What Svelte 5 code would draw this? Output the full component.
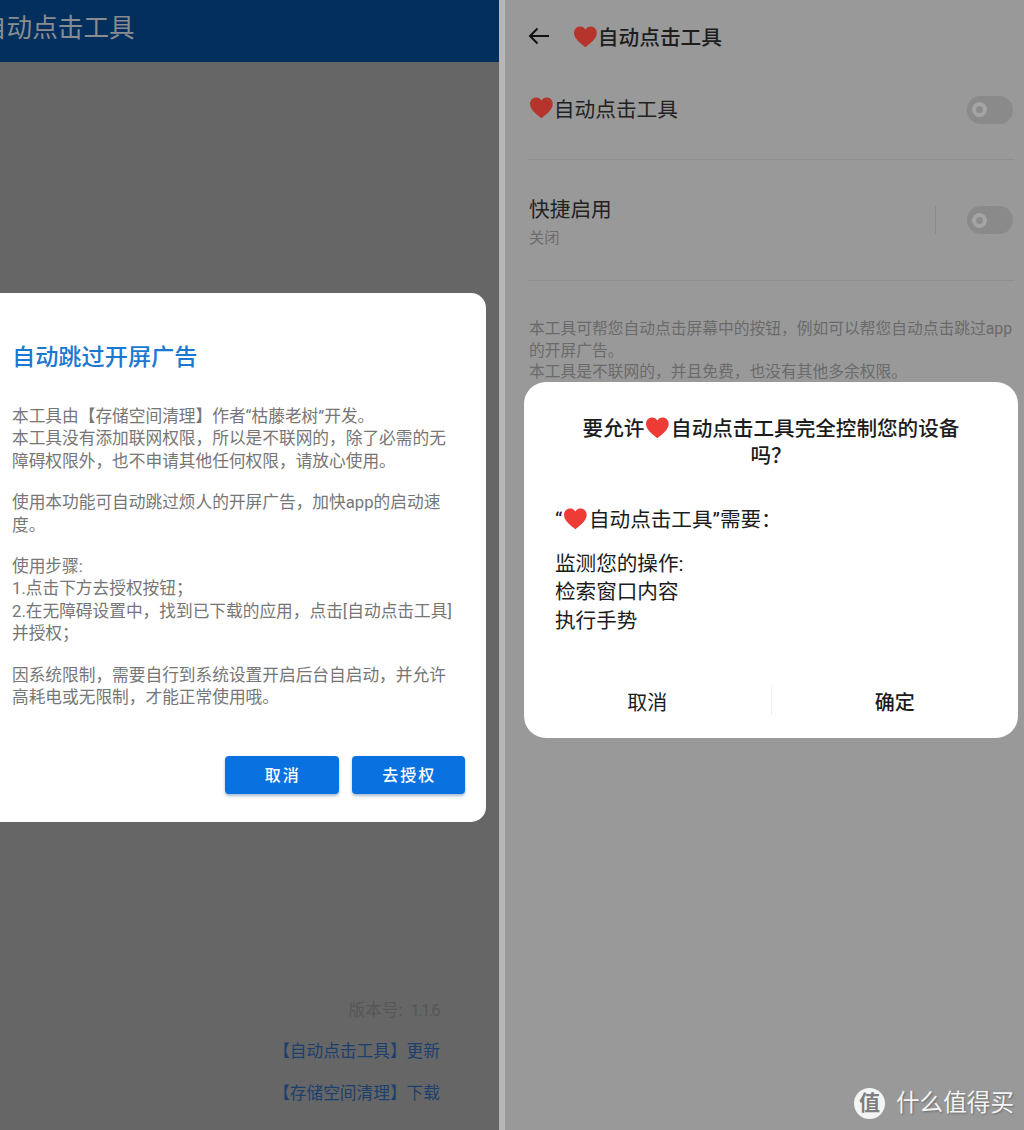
<script lang="ts">
const heart = 'M12 21.5C5.5 16.5 1 12.6 1 7.6 1 4 3.7 1.5 7 1.5c2 0 3.900 1 5 2.800 1.100-1.800 3-2.800 5-2.800 3.300 0 6 2.500 6 6.100 0 5-4.500 8.900-11 13.900z'
</script>

{#snippet heartIcon(cls)}
  <svg class="heart {cls}" viewBox="0 0 24 24" aria-hidden="true"><path d={heart} /></svg>
{/snippet}

{#snippet toggle()}
  <span class="toggle"><span class="knob"></span></span>
{/snippet}

<div class="screen">
  <section class="left">
    <header class="app-bar">自动点击工具</header>
    <div class="left-body">
      <div class="auth-dialog">
        <h2>自动跳过开屏广告</h2>
        <p>本工具由【存储空间清理】作者“枯藤老树”开发。<br />本工具没有添加联网权限，所以是不联网的，除了必需的无<br />障碍权限外，也不申请其他任何权限，请放心使用。</p>
        <p>使用本功能可自动跳过烦人的开屏广告，加快app的启动速<br />度。</p>
        <p>使用步骤:<br />1.点击下方去授权按钮；<br />2.在无障碍设置中，找到已下载的应用，点击[自动点击工具]<br />并授权；</p>
        <p>因系统限制，需要自行到系统设置开启后台自启动，并允许<br />高耗电或无限制，才能正常使用哦。</p>
        <div class="auth-actions">
          <button>取消</button>
          <button>去授权</button>
        </div>
      </div>
      <footer class="about">
        <span class="version">版本号:<span class="num">1.1.6</span></span>
        <span class="link">【自动点击工具】更新</span>
        <span class="link">【存储空间清理】下载</span>
      </footer>
    </div>
  </section>

  <section class="right">
    <header class="nav">
      <svg class="back" viewBox="0 0 22 18" aria-hidden="true"><path d="M21 9H2M9.500 1.500 2 9l7.500 7.500" /></svg>
      <span class="nav-title">{@render heartIcon('dim')}自动点击工具</span>
    </header>

    <div class="row first">
      <span class="row-title">{@render heartIcon('dim')}自动点击工具</span>
      {@render toggle()}
    </div>
    <div class="row second">
      <div class="row-text">
        <div class="row-title">快捷启用</div>
        <div class="row-sub">关闭</div>
      </div>
      <span class="row-end">
        <i class="vline"></i>
        {@render toggle()}
      </span>
    </div>
    <p class="desc">本工具可帮您自动点击屏幕中的按钮，例如可以帮您自动点击跳过app<br />的开屏广告。<br />本工具是不联网的，并且免费，也没有其他多余权限。</p>

    <div class="perm-dialog">
      <h3>要允许{@render heartIcon('bright')}自动点击工具完全控制您的设备<br />吗？</h3>
      <p class="perm-lead">“{@render heartIcon('bright')}自动点击工具”需要：</p>
      <p class="perm-list">监测您的操作:<br />检索窗口内容<br />执行手势</p>
      <div class="perm-actions">
        <button>取消</button>
        <i></i>
        <button class="ok">确定</button>
      </div>
    </div>

    <div class="watermark">
      <span class="badge">值</span>
      <span>什么值得买</span>
    </div>
  </section>
</div>

<style>
  :global(body) {
    margin: 0;
    background: #999;
  }

  .screen {
    display: flex;
    width: 1024px;
    height: 1130px;
    overflow: hidden;
    font-family: Roboto, 'Noto Sans CJK SC', sans-serif;
  }

  .left {
    width: 499px;
    flex-shrink: 0;
    display: flex;
    flex-direction: column;
    background: #666;
    border-right: 6px solid #b6b6b6;
    overflow: hidden;
  }

  .app-bar {
    height: 62px;
    flex-shrink: 0;
    margin-left: -19px;
    background: #032f5e;
    color: #8a8d90;
    font-size: 25.6px;
    line-height: 57px;
    white-space: nowrap;
  }

  .left-body {
    flex: 1;
    display: flex;
    flex-direction: column;
    padding-top: 231px;
  }

  .auth-dialog {
    box-sizing: border-box;
    width: 520px;
    height: 529px;
    margin-left: -34px;
    padding: 46px 21px 0 46px;
    background: #fff;
    border-radius: 15px;
    color: #767676;
    font-size: 16.7px;
    line-height: 22.4px;
    white-space: nowrap;
    position: relative;
  }

  .auth-dialog h2 {
    margin: 0 0 31px;
    color: #1a78d2;
    font-size: 23.2px;
    font-weight: 500;
    line-height: 36px;
  }

  .auth-dialog p {
    margin: 0 0 19px;
  }

  .auth-actions {
    display: flex;
    justify-content: flex-end;
    gap: 13px;
    position: absolute;
    right: 21px;
    bottom: 28px;
  }

  .auth-actions button {
    width: 113.5px;
    height: 38px;
    border: 0;
    padding: 3px 0 0 2px;
    border-radius: 4px;
    background: #0a72e0;
    color: #fff;
    font: inherit;
    font-size: 16px;
    font-weight: 500;
    letter-spacing: 2px;
    box-shadow: 0 2px 3px rgba(0, 60, 130, 0.35);
  }

  .about {
    margin-top: auto;
    padding: 0 59px 25px 0;
    display: flex;
    flex-direction: column;
    align-items: flex-end;
    gap: 19px;
    font-size: 16.7px;
    line-height: 22.5px;
    white-space: nowrap;
  }

  .version {
    color: #565656;
  }

  .num {
    letter-spacing: -1.7px;
    margin: 0 1px 0 8px;
  }

  .link {
    color: #1c406d;
  }

  .right {
    flex: 1;
    position: relative;
    box-sizing: border-box;
    padding: 0 10px 0 24px;
    background: #999;
    color: #1d1d1d;
  }

  .heart {
    width: 1.2em;
    height: 1.2em;
    vertical-align: -0.22em;
  }

  .heart.dim path {
    fill: #b5342b;
  }

  .heart.bright {
    margin: 0 1px;
  }

  .heart.bright path {
    fill: #ee3b36;
  }

  .nav {
    height: 72px;
    display: flex;
    align-items: center;
  }

  .back {
    width: 22px;
    height: 18px;
    margin: 0 23px 0 -1px;
    fill: none;
    stroke: #111;
    stroke-width: 2;
  }

  .nav-title {
    font-size: 20.7px;
    font-weight: 500;
  }

  .row {
    display: flex;
    align-items: center;
    justify-content: space-between;
    border-bottom: 1px solid #8f8f8f;
  }

  .row.first {
    box-sizing: border-box;
    height: 88px;
    padding: 0 1px 12px 0;
  }

  .row.second {
    height: 120px;
    padding-right: 1px;
  }

  .row-text {
    padding-top: 4px;
  }

  .row-title {
    font-size: 20.7px;
    line-height: 28px;
    color: #222;
  }

  .row-sub {
    margin-top: 3px;
    font-size: 15.3px;
    line-height: 22px;
    color: #6d6d6d;
  }

  .row-end {
    display: flex;
    align-items: center;
    gap: 31px;
  }

  .vline {
    width: 1px;
    height: 28px;
    background: #8a8a8a;
  }

  .toggle {
    display: flex;
    align-items: center;
    box-sizing: border-box;
    width: 46px;
    height: 28px;
    padding-left: 5px;
    border-radius: 14px;
    background: #8a8a8a;
  }

  .knob {
    box-sizing: border-box;
    width: 15px;
    height: 15px;
    border-radius: 50%;
    border: 4px solid #a4a4a4;
    background: #8c8c8c;
  }

  .desc {
    margin: 37px 0 0;
    color: #6a6a6a;
    font-size: 15.76px;
    line-height: 21.7px;
    white-space: nowrap;
  }

  .perm-dialog {
    position: absolute;
    left: 19px;
    top: 382px;
    box-sizing: border-box;
    width: 494px;
    height: 356px;
    padding: 34px 31px 0;
    background: #fff;
    border-radius: 22px;
    color: #1c1c1c;
    font-size: 20.6px;
  }

  .perm-dialog h3 {
    margin: 0;
    text-align: center;
    font-size: 20.6px;
    font-weight: 500;
    line-height: 27px;
    white-space: nowrap;
  }

  .perm-lead {
    margin: 36px 0 16px;
    line-height: 28px;
    white-space: nowrap;
  }

  .perm-list {
    margin: 0;
    line-height: 28.2px;
  }

  .perm-actions {
    position: absolute;
    left: 0;
    right: 0;
    bottom: 19px;
    height: 36px;
    display: flex;
    align-items: center;
  }

  .perm-actions button {
    flex: 1;
    border: 0;
    padding: 0;
    background: none;
    color: #1c1c1c;
    font: inherit;
    font-size: 20px;
  }

  .perm-actions .ok {
    font-weight: 500;
  }

  .perm-actions i {
    width: 1px;
    height: 28px;
    background: #eee;
  }

  .watermark {
    position: absolute;
    right: 10px;
    bottom: 11px;
    display: flex;
    align-items: center;
    gap: 11px;
    color: #f4f4f4;
    font-size: 23.6px;
    line-height: 32px;
    text-shadow: 1px 1px 2px rgba(0, 0, 0, 0.3);
  }

  .badge {
    width: 31px;
    height: 31px;
    border-radius: 50%;
    background: #f4f4f4;
    color: #7d7d7d;
    font-size: 21px;
    font-weight: 700;
    line-height: 31px;
    text-align: center;
    text-shadow: none;
  }
</style>
